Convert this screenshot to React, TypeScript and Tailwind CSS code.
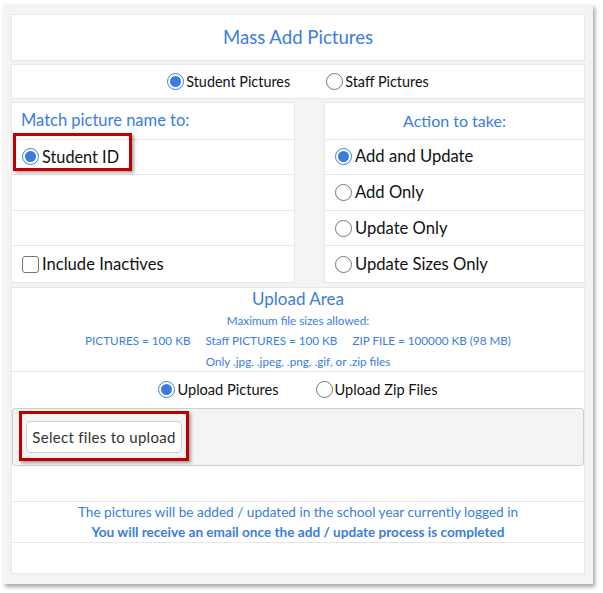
import React from 'react';

const font = { fontFamily: 'Lato, "Noto Sans", sans-serif' };

function Radio({ checked }: { checked?: boolean }) {
  return checked ? (
    <span className="w-[17px] h-[17px] rounded-full border border-[#3b7ddd] bg-white flex items-center justify-center shrink-0">
      <span className="w-[11px] h-[11px] rounded-full bg-[#3b7ddd]" />
    </span>
  ) : (
    <span className="w-[17px] h-[17px] rounded-full border border-[#767676] bg-white shrink-0" />
  );
}

function Row({ children, last }: { children?: React.ReactNode; last?: boolean }) {
  return (
    <div className={`h-[36px] flex items-center ${last ? '' : 'border-b border-[#e6e6e6]'}`}>{children}</div>
  );
}

export default function App() {
  return (
    <div className="w-[603px] h-[593px] bg-white" style={font}>
      <div className="absolute left-[3px] top-[4px] w-[590px] h-[580px] bg-[#f4f4f4] shadow-[2px_3px_4px_rgba(0,0,0,0.35)] px-[8px] pt-[10px] flex flex-col">
        {/* title */}
        <div className="h-[47px] bg-white border border-[#e8e8e8] flex items-center justify-center text-[18.6px] text-[#3b7ddd] mb-[3px]">
          Mass Add Pictures
        </div>

        {/* picture type */}
        <div className="h-[35px] bg-white border border-[#e8e8e8] flex items-center justify-center gap-[36px] text-[14.4px] text-[#111] mb-[3px]">
          <label className="flex items-center gap-[2px]">
            <Radio checked />
            Student Pictures
          </label>
          <label className="flex items-center gap-[2px]">
            <Radio />
            Staff Pictures
          </label>
        </div>

        {/* match / action */}
        <div className="h-[181px] flex justify-between mb-[4px]">
          <div className="w-[284px] bg-white border border-[#e8e8e8] flex flex-col">
            <div className="h-[37px] border-b border-[#e6e6e6] flex items-center pl-[9px] text-[16.5px] text-[#3b7ddd]">
              Match picture name to:
            </div>
            <Row>
              <div className="relative flex items-center gap-[3px] pl-[10px] text-[16.3px] text-[#111]">
                <Radio checked />
                Student ID
                <div className="absolute left-[1px] top-[-12px] w-[119px] h-[38px] border-[3px] border-[#c00000] shadow-[2px_2px_3px_rgba(0,0,0,0.35)]" />
              </div>
            </Row>
            <Row />
            <Row />
            <Row last>
              <div className="flex items-center gap-[3px] pl-[10px] text-[16.6px] text-[#111]">
                <span className="w-[17px] h-[17px] rounded-[3px] border border-[#767676] bg-white" />
                Include Inactives
              </div>
            </Row>
          </div>
          <div className="w-[261px] bg-white border border-[#e8e8e8] flex flex-col">
            <div className="h-[37px] border-b border-[#e6e6e6] flex items-center justify-center text-[16px] text-[#3b7ddd]">
              Action to take:
            </div>
            {['Add and Update', 'Add Only', 'Update Only', 'Update Sizes Only'].map((t, i) => (
              <Row key={t} last={i === 3}>
                <div className="flex items-center gap-[3px] pl-[10px] text-[16.6px] text-[#111]">
                  <Radio checked={i === 0} />
                  {t}
                </div>
              </Row>
            ))}
          </div>
        </div>

        {/* upload area */}
        <div className="h-[287px] bg-white border border-[#e8e8e8] flex flex-col">
          <div className="h-[84px] border-b border-[#e6e6e6] flex flex-col items-center text-[#3b7ddd]">
            <div className="h-[22px] leading-[22px] text-[17px]">Upload Area</div>
            <div className="h-[20px] leading-[20px] text-[11.7px]">Maximum file sizes allowed:</div>
            <div className="h-[21px] leading-[21px] text-[11.7px] flex gap-[15px]">
              <span>PICTURES = 100 KB</span>
              <span>Staff PICTURES = 100 KB</span>
              <span>ZIP FILE = 100000 KB (98 MB)</span>
            </div>
            <div className="h-[20px] leading-[20px] text-[11.7px]">Only .jpg, .jpeg, .png, .gif, or .zip files</div>
          </div>
          <div className="h-[35px] flex items-center justify-center gap-[37px] text-[14.6px] text-[#111]">
            <label className="flex items-center gap-[2px]">
              <Radio checked />
              Upload Pictures
            </label>
            <label className="flex items-center gap-[2px]">
              <Radio />
              Upload Zip Files
            </label>
          </div>
          <div className="h-[58px] mt-[1px] bg-[#f4f4f4] border border-[#cfcfcf] rounded-[3px] flex items-center pl-[13px]">
            <div className="relative">
              <button className="h-[32px] w-[156px] bg-white border border-[#cfcfcf] rounded-[4px] text-[15px] tracking-[0.3px] text-[#333]">
                Select files to upload
              </button>
              <div className="absolute left-[-7px] top-[-10px] w-[170px] h-[50px] border-[3px] border-[#c00000] shadow-[2px_2px_3px_rgba(0,0,0,0.35)]" />
            </div>
          </div>
          <div className="h-[36px] border-b border-[#e6e6e6]" />
          <div className="h-[41px] border-b border-[#e6e6e6] flex flex-col items-center justify-center text-[13.6px] text-[#3b7ddd]">
            <div className="h-[20px] leading-[20px]">The pictures will be added / updated in the school year currently logged in</div>
            <div className="h-[20px] leading-[20px] font-bold">You will receive an email once the add / update process is completed</div>
          </div>
        </div>
      </div>
    </div>
  );
}
